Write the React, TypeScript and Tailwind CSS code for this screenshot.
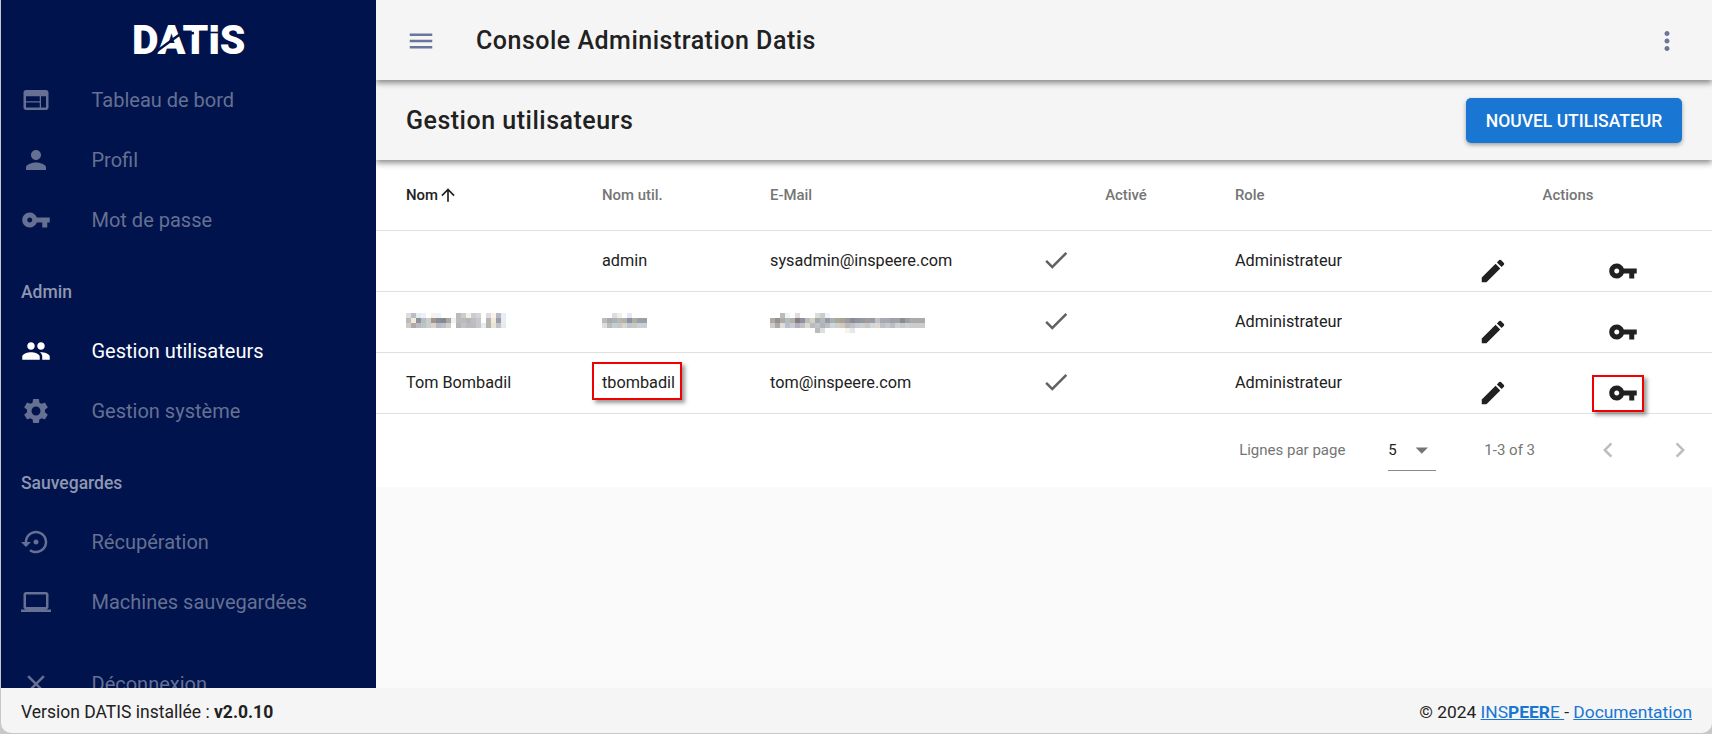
import React from "react";

const P = {
  web: "M20 4H4c-1.1 0-1.99.9-1.99 2L2 18c0 1.1.9 2 2 2h16c1.1 0 2-.9 2-2V6c0-1.1-.9-2-2-2zm-5 14H4v-4h11v4zm0-5H4V9h11v4zm5 5h-4V9h4v9z",
  person: "M12 12c2.21 0 4-1.79 4-4s-1.79-4-4-4-4 1.79-4 4 1.79 4 4 4zm0 2c-2.67 0-8 1.34-8 4v2h16v-2c0-2.66-5.33-4-8-4z",
  key: "M12.65 10C11.83 7.67 9.61 6 7 6c-3.31 0-6 2.69-6 6s2.69 6 6 6c2.61 0 4.83-1.67 5.65-4H17v4h4v-4h2v-4H12.65zM7 14c-1.1 0-2-.9-2-2s.9-2 2-2 2 .9 2 2-.9 2-2 2z",
  people: "M16 11c1.66 0 2.99-1.34 2.99-3S17.66 5 16 5c-1.66 0-3 1.34-3 3s1.34 3 3 3zm-8 0c1.66 0 2.99-1.34 2.99-3S9.66 5 8 5C6.34 5 5 6.34 5 8s1.34 3 3 3zm0 2c-2.33 0-7 1.17-7 3.5V19h14v-2.5c0-2.33-4.67-3.5-7-3.5zm8 0c-.29 0-.62.02-.97.05 1.16.84 1.97 1.97 1.97 3.45V19h6v-2.5c0-2.33-4.67-3.5-7-3.5z",
  settings: "M19.14 12.94c.04-.3.06-.61.06-.94 0-.32-.02-.64-.07-.94l2.03-1.58c.18-.14.23-.41.12-.61l-1.92-3.32c-.12-.22-.37-.29-.59-.22l-2.39.96c-.5-.38-1.03-.7-1.62-.94l-.36-2.54c-.04-.24-.24-.41-.48-.41h-3.84c-.24 0-.43.17-.47.41l-.36 2.54c-.59.24-1.13.57-1.62.94l-2.39-.96c-.22-.08-.47 0-.59.22L2.74 8.87c-.12.21-.08.47.12.61l2.03 1.58c-.05.3-.09.63-.09.94s.02.64.07.94l-2.03 1.58c-.18.14-.23.41-.12.61l1.92 3.32c.12.22.37.29.59.22l2.39-.96c.5.38 1.03.7 1.62.94l.36 2.54c.05.24.24.41.48.41h3.84c.24 0 .44-.17.47-.41l.36-2.54c.59-.24 1.13-.56 1.62-.94l2.39.96c.22.08.47 0 .59-.22l1.92-3.32c.12-.22.07-.47-.12-.61l-2.01-1.58zM12 15.6c-1.98 0-3.6-1.62-3.6-3.6s1.62-3.6 3.6-3.6 3.6 1.62 3.6 3.6-1.62 3.6-3.6 3.6z",
  restore: "M14 12c0-1.1-.9-2-2-2s-2 .9-2 2 .9 2 2 2 2-.9 2-2zm-2-9c-4.97 0-9 4.03-9 9H0l4 4 4-4H5c0-3.87 3.13-7 7-7s7 3.13 7 7-3.13 7-7 7c-1.51 0-2.91-.49-4.06-1.3l-1.42 1.44C8.04 20.3 9.94 21 12 21c4.97 0 9-4.03 9-9s-4.03-9-9-9z",
  laptop: "M20 18c1.1 0 1.99-.9 1.99-2L22 6c0-1.1-.9-2-2-2H4c-1.1 0-2 .9-2 2v10c0 1.1.9 2 2 2H0v2h24v-2h-4zM4 6h16v10H4V6z",
  close: "M19 6.41L17.59 5 12 10.59 6.41 5 5 6.41 10.59 12 5 17.59 6.41 19 12 13.41 17.59 19 19 17.59 13.41 12z",
  menu: "M3 18h18v-2H3v2zm0-5h18v-2H3v2zm0-7v2h18V6H3z",
  more: "M12 8c1.1 0 2-.9 2-2s-.9-2-2-2-2 .9-2 2 .9 2 2 2zm0 2c-1.1 0-2 .9-2 2s.9 2 2 2 2-.9 2-2-.9-2-2-2zm0 6c-1.1 0-2 .9-2 2s.9 2 2 2 2-.9 2-2-.9-2-2-2z",
  edit: "M3 17.25V21h3.75L17.81 9.94l-3.75-3.75L3 17.25zM20.71 7.04c.39-.39.39-1.02 0-1.41l-2.34-2.34a.9959.9959 0 00-1.41 0l-1.83 1.83 3.75 3.75 1.83-1.83z",
  check: "M9 16.17L4.83 12l-1.42 1.41L9 19 21 7l-1.41-1.41z",
  up: "M4 12l1.41 1.41L11 7.83V20h2V7.83l5.58 5.59L20 12l-8-8-8 8z",
  left: "M15.41 7.41L14 6l-6 6 6 6 1.41-1.41L10.83 12z",
  right: "M10 6L8.59 7.41 13.17 12l-4.58 4.58L10 18l6-6z",
  drop: "M7 10l5 5 5-5z",
};

function Icon({ d, className }: { d: string; className: string }) {
  return (
    <svg viewBox="0 0 24 24" fill="currentColor" className={className}>
      <path d={d} />
    </svg>
  );
}

function Mosaic({ rows }: { rows: string[] }) {
  const cols = Math.max(...rows.map((r) => r.split(" ").length));
  return (
    <div className="h-[15px] -translate-y-[2px]">
      <svg width={cols * 5} height={rows.length * 5} shapeRendering="crispEdges" className="block">
        {rows.map((r, y) =>
          r.split(" ").map((c, x) =>
            c === "-" ? null : <rect key={`${x}-${y}`} x={x * 5} y={y * 5} width={5} height={5} fill={`#${c}`} />
          )
        )}
      </svg>
    </div>
  );
}

const nameRows = [
  "ddd bbc dee eef fff f5f2ee eef3f7 fff fff fff bbb ccc f5efe5 c9cdd8 d5d5d8 fff dcdcdf f7f3e6 b5b8c2 e8edf5",
  "bbb f5e8d8 8f8f9a b5bfc0 ccc 9e9690 8c8c90 808890 a8a8a0 eef2f7 bbb b8bcbc b5b5b5 bcc0c5 c8c8c8 fff b8b5b0 f0ead8 9a9ca8 e8edf5",
  "ccc aaa bcb8c0 b8c5c5 ccc d8d5c8 b5b8c5 bcc0c8 d0d0c8 fff b5b5b8 c0c2c5 bbb bcbcc0 c5c8cc e8eaee b5b5ac e5e5d5 c0c2c8 e5eaf0",
];
const userRows = [
  "- - ddd eee - e5e8f0 - - -",
  "bbb aaa a8b0b8 bab8a8 b5b0a8 8892a8 b0aea0 9aa0a8 9aa0a5",
  "ddd b8bcc0 c5cdd0 c5c8c8 d5d5cc c0c5c8 c8c8c8 ccd0d5 ccd0d5",
];
const mailRows = [
  "- - bbb eef3f8 - ddd - - - ddd ccc f0f3f8 - - - - - - - - - - - - - - - - - - -",
  "aaa 9a9088 b0aaa5 b5bcc0 b8b0a5 808084 9090a0 c0bcb8 d5d0c8 a8a8a8 b0b8c0 9a98a8 a8b0b0 a8a89a b0a090 989ca0 8c8c8c 8f95a0 9098a0 a09c98 989ca8 bcc0c8 a8a8b0 a8a8b0 a0a0a8 a0a4a8 8c8c90 9aa0a8 aaa aaa aaa",
  "ccc aaa ddd b8c0d0 c5ccd5 b5b0c0 c0c0c8 dddad0 bbb bcc5c8 b8b0b8 b8c0c0 cdd5d5 ccd0d0 d5c8b8 b8b8c0 c0c0c8 c8ccd0 ccd0d0 c8c8c8 d0d8d8 e0d8d0 c0c0c8 c8c8d0 bcbcc4 d0d0d0 c8c8d0 d0d0d0 ccc ccc ccc",
  "- - - - - - - - - bbb d8e0e0 - - - - fdf0e5 e0e8f0 - - - - - - - - - - - - - -",
];

function NavItem({ d, label, active }: { d: string; label: string; active?: boolean }) {
  return (
    <div className={`flex h-[60px] shrink-0 items-center pl-5 text-[20px] ${active ? "text-white" : "text-[#667092]"}`}>
      <div className="w-[70.5px] shrink-0">
        <Icon d={d} className="h-[30px] w-[30px]" />
      </div>
      <span>{label}</span>
    </div>
  );
}

function NavLabel({ label }: { label: string }) {
  return (
    <div className="h-[71px] shrink-0 pl-5 pt-[29px] text-[17.5px] font-medium leading-[26px] text-[#8f97b0]">{label}</div>
  );
}

const td = "p-0 pl-[30px] pt-[2px] align-middle text-[16.25px] text-[#212121]";
const th = "p-0 pl-[30px] text-left align-middle text-[14.9px] font-medium text-[#757575]";

function Row({ name, user, mail, boxed }: { name: React.ReactNode; user: React.ReactNode; mail: React.ReactNode; boxed?: boolean }) {
  return (
    <tr className="h-[61px] border-b border-[#e0e0e0]">
      <td className={td}>{name}</td>
      <td className={td}>
        <div className="relative">
          {user}
          {boxed && (
            <div className="absolute -top-[9px] -left-[10px] h-[38px] w-[90px] border-2 border-[#f00000] shadow-[3px_3px_4px_rgba(0,0,0,0.4)]" />
          )}
        </div>
      </td>
      <td className={td}>{mail}</td>
      <td className="p-0 pl-[26px] pb-[1px] align-middle text-[#616161]">
        <Icon d={P.check} className="h-[30px] w-[30px]" />
      </td>
      <td className={td}>Administrateur</td>
      <td className="p-0 pl-[15px] pt-[20px] align-middle text-[#212121]">
        <Icon d={P.edit} className="h-[30px] w-[30px]" />
      </td>
      <td className="p-0 pl-[22px] pt-[20px] align-middle text-[#212121]">
        <div className="relative w-[30px]">
          <Icon d={P.key} className="h-[30px] w-[30px]" />
          {boxed && (
            <div className="absolute -top-[3px] -left-[16px] h-[37px] w-[52px] border-2 border-[#f00000] shadow-[3px_3px_4px_rgba(0,0,0,0.4)]" />
          )}
        </div>
      </td>
    </tr>
  );
}

export default function App() {
  return (
    <div className="flex h-screen w-screen flex-col overflow-hidden bg-[#c8c8c8] pb-px pl-px font-[Roboto,sans-serif]">
      <div className="flex min-h-0 flex-1 flex-col overflow-hidden rounded-b-[10px]">
        <div className="flex min-h-0 flex-1">
          <aside className="relative z-30 flex w-[375px] shrink-0 flex-col overflow-hidden bg-[#00134d]">
            <div className="flex h-[70px] shrink-0 items-center justify-center pt-[10px]">
              <div className="relative text-[41px] font-black leading-none tracking-[-0.5px] text-white">
                DATIS
                <svg viewBox="0 0 112 30" className="absolute left-0 top-[5px] h-[30px] w-[112px]">
                  <path d="M25 26 L47 10 L62 8" stroke="#00134d" strokeWidth="2.4" fill="none" />
                  <path d="M72 7.5 H86" stroke="#00134d" strokeWidth="1.6" fill="none" />
                </svg>
              </div>
            </div>
            <NavItem d={P.web} label="Tableau de bord" />
            <NavItem d={P.person} label="Profil" />
            <NavItem d={P.key} label="Mot de passe" />
            <NavLabel label="Admin" />
            <NavItem d={P.people} label="Gestion utilisateurs" active />
            <NavItem d={P.settings} label="Gestion système" />
            <NavLabel label="Sauvegardes" />
            <NavItem d={P.restore} label="Récupération" />
            <NavItem d={P.laptop} label="Machines sauvegardées" />
            <div className="mt-[22px]">
              <NavItem d={P.close} label="Déconnexion" />
            </div>
          </aside>
          <main className="flex min-w-0 flex-1 flex-col bg-[#fafafa]">
            <header className="relative z-20 flex h-20 shrink-0 items-center bg-[#f5f5f5] pt-[2px] shadow-[0_3px_6px_rgba(0,0,0,0.45)]">
              <Icon d={P.menu} className="ml-[30px] h-[30px] w-[30px] text-[#6b7499]" />
              <h1 className="ml-[40px] text-[25px] font-medium tracking-[0.5px] text-[#212121]">Console Administration Datis</h1>
              <Icon d={P.more} className="ml-auto mr-[30px] h-[30px] w-[30px] text-[#6b7499]" />
            </header>
            <section className="relative z-10 flex h-20 shrink-0 items-center justify-between bg-[#f5f5f5] pl-[30px] pr-[30px] shadow-[0_3px_6px_rgba(0,0,0,0.45)]">
              <h2 className="pt-[2px] text-[25px] font-medium tracking-[0.5px] text-[#212121]">Gestion utilisateurs</h2>
              <button className="flex h-[45px] w-[216px] items-center justify-center rounded-[5px] bg-[#1976d2] pt-[2px] text-[17.5px] font-medium uppercase text-white shadow-[0_2px_4px_rgba(0,0,0,0.35)]">
                Nouvel utilisateur
              </button>
            </section>
            <div className="shrink-0 bg-white">
              <table className="w-[1336px] table-fixed border-collapse">
                <colgroup>
                  <col className="w-[196px]" />
                  <col className="w-[168px]" />
                  <col className="w-[275px]" />
                  <col className="w-[190px]" />
                  <col className="w-[258px]" />
                  <col className="w-[123px]" />
                  <col className="w-[126px]" />
                </colgroup>
                <thead>
                  <tr className="h-[70px] border-b border-[#e0e0e0]">
                    <th className={`${th} !text-[#212121]`}>
                      <span className="inline-flex items-center">
                        Nom
                        <Icon d={P.up} className="h-[20px] w-[20px]" />
                      </span>
                    </th>
                    <th className={th}>Nom util.</th>
                    <th className={th}>E-Mail</th>
                    <th className={`${th} !pl-[32px] !text-center`}>Activé</th>
                    <th className={th}>Role</th>
                    <th colSpan={2} className={`${th} !pl-0 pr-[39px] !text-center`}>Actions</th>
                  </tr>
                </thead>
                <tbody>
                  <Row name="" user="admin" mail="sysadmin@inspeere.com" />
                  <Row name={<Mosaic rows={nameRows} />} user={<Mosaic rows={userRows} />} mail={<Mosaic rows={mailRows} />} />
                  <Row name="Tom Bombadil" user="tbombadil" mail="tom@inspeere.com" boxed />
                </tbody>
              </table>
              <div className="flex h-[73px] items-center justify-end pr-[17px] text-[15px] text-[#757575]">
                <span>Lignes par page</span>
                <div className="ml-[43px] flex h-[42px] w-[48px] items-center border-b border-[#8a8a8a] text-[#212121]">
                  <span className="mt-[2px]">5</span>
                  <Icon d={P.drop} className="ml-[10px] h-[30px] w-[30px] text-[#757575]" />
                </div>
                <span className="ml-[48px]">1-3 of 3</span>
                <Icon d={P.left} className="ml-[58px] h-[30px] w-[30px] text-[#bdbdbd]" />
                <Icon d={P.right} className="ml-[42px] h-[30px] w-[30px] text-[#bdbdbd]" />
              </div>
            </div>
          </main>
        </div>
        <footer className="flex h-[45px] shrink-0 items-center justify-between bg-[#f5f5f5] pl-5 pr-[20px] pt-[4px] text-[17.5px] text-[#212121]">
          <span>
            Version DATIS installée : <b className="font-bold">v2.0.10</b>
          </span>
          <span className="text-[17.4px]">
            © 2024 <a className="text-[#1976d2] underline">INS<b className="font-bold">PEER</b>E </a>- <a className="text-[#1976d2] underline">Documentation</a>
          </span>
        </footer>
      </div>
    </div>
  );
}
